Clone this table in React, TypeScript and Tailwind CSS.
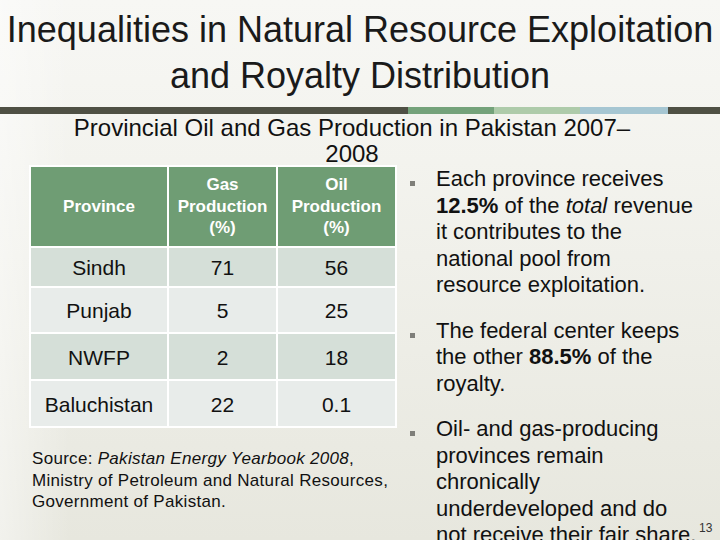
import React from "react";

const rows = [
  { name: "Sindh", gas: "71", oil: "56", bg: "bg-[#d5dfd8]", h: "h-[38px]" },
  { name: "Punjab", gas: "5", oil: "25", bg: "bg-[#e8ecea]", h: "h-[44px]" },
  { name: "NWFP", gas: "2", oil: "18", bg: "bg-[#d5dfd8]", h: "h-[45px]" },
  { name: "Baluchistan", gas: "22", oil: "0.1", bg: "bg-[#e8ecea]", h: "h-[45px]" },
];

const Bullet = ({ children }: { children: React.ReactNode }) => (
  <div className="flex">
    <div className="w-[5px] h-[5px] mt-[15px] bg-[#7f7f7a] shrink-0" />
    <p className="ml-[21px] w-[262px] text-[22px] leading-[26.5px] text-[#111]">
      {children}
    </p>
  </div>
);

const App = () => {
  return (
    <div className="relative w-[720px] h-[540px] overflow-hidden font-['Liberation_Sans',Arial,sans-serif] text-[#111] bg-[linear-gradient(to_right,rgba(255,255,255,0.45),rgba(255,255,255,0)_70px),linear-gradient(to_bottom,#f7f7f4,#f3f3ee_30%,#e7e7de)]">
      <h1 className="pt-[7px] text-center text-[36px] leading-[46px] text-[#1a1a1a]">
        Inequalities in Natural Resource Exploitation
        <br />
        and Royalty Distribution
      </h1>

      <div className="mt-[8px] flex h-[7px]">
        <div className="w-[408px] bg-[#4f5044]" />
        <div className="w-[86px] bg-[#74a27a]" />
        <div className="w-[86px] bg-[#aecbaa]" />
        <div className="w-[88px] bg-[#a6c6d2]" />
        <div className="flex-1 bg-[#4f5044]" />
      </div>

      <div className="h-[52px] pt-[1px]">
        <p className="ml-[52px] w-[600px] text-center text-[24px] leading-[26px]">
          Provincial Oil and Gas Production in Pakistan 2007–2008
        </p>
      </div>

      <div className="flex -mt-[1px]">
        <div className="ml-[29px] w-[368px]">
          <div className="grid grid-cols-[136px_107px_117px] gap-[2px] p-[2px] bg-white">
            <div className="h-[79px] bg-[#6f9d74] flex items-center justify-center text-white font-bold text-[17px] leading-[21.5px]">
              Province
            </div>
            <div className="h-[79px] bg-[#6f9d74] flex items-center justify-center text-center text-white font-bold text-[17px] leading-[21.5px]">
              Gas
              <br />
              Production
              <br />
              (%)
            </div>
            <div className="h-[79px] bg-[#6f9d74] flex items-center justify-center text-center text-white font-bold text-[17px] leading-[21.5px]">
              Oil
              <br />
              Production
              <br />
              (%)
            </div>
            {rows.map((r) => (
              <React.Fragment key={r.name}>
                <div className={`${r.h} ${r.bg} flex items-center justify-center pt-[2px] text-[21px]`}>
                  {r.name}
                </div>
                <div className={`${r.h} ${r.bg} flex items-center justify-center pt-[2px] text-[21px]`}>
                  {r.gas}
                </div>
                <div className={`${r.h} ${r.bg} flex items-center justify-center pt-[2px] text-[21px]`}>
                  {r.oil}
                </div>
              </React.Fragment>
            ))}
          </div>

          <p className="mt-[20px] ml-[3px] text-[17px] leading-[21.5px] tracking-[0.3px]">
            Source: <em>Pakistan Energy Yearbook 2008</em>,
            <br />
            Ministry of Petroleum and Natural Resources,
            <br />
            Government of Pakistan.
          </p>
        </div>

        <div className="ml-[13px] mt-[1px] space-y-[19px]">
          <Bullet>
            Each province receives <b>12.5%</b> of the <em>total</em> revenue
            it contributes to the national pool from resource exploitation.
          </Bullet>
          <Bullet>
            The federal center keeps the other <b>88.5%</b> of the royalty.
          </Bullet>
          <Bullet>
            Oil- and gas-producing provinces remain chronically underdeveloped
            and do not receive their fair share.
          </Bullet>
        </div>
      </div>

      <div className="absolute left-[699px] top-[519px] text-[12px] text-[#333]">13</div>
    </div>
  );
};

export default App;
